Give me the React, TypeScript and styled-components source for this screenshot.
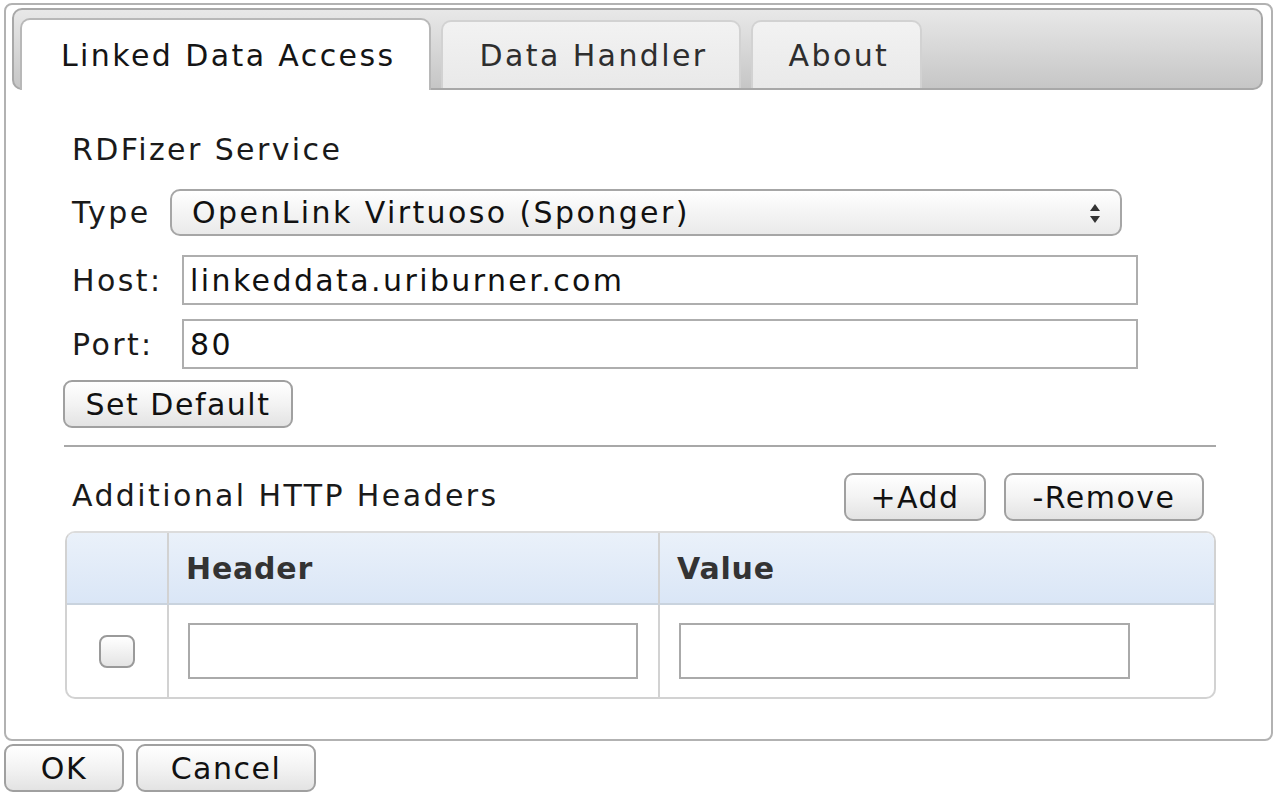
import * as React from "react";
import styled, { createGlobalStyle } from "styled-components";

const GlobalStyle = createGlobalStyle`
  html, body {
    margin: 0;
    padding: 0;
    background: #ffffff;
  }
  body {
    font-family: "DejaVu Sans", Verdana, sans-serif;
    color: #1a1a1a;
    letter-spacing: 2.4px;
  }
`;

const Page = styled.div`
  width: 1280px;
  height: 800px;
  padding: 3px 7px 0 4px;
  box-sizing: border-box;
`;

const Dialog = styled.div`
  height: 738px;
  box-sizing: border-box;
  border: 2px solid #b2b2b2;
  border-radius: 8px;
  padding: 3px 8px 0 6px;
`;

const TabBar = styled.div`
  height: 82px;
  box-sizing: border-box;
  display: flex;
  align-items: flex-end;
  gap: 10px;
  padding-left: 6px;
  border: 2px solid #a8a8a8;
  border-radius: 10px;
  background: linear-gradient(#e8e8e8, #c6c6c6);
`;

const Tab = styled.div<{ $active?: boolean }>`
  height: ${(p) => (p.$active ? "72px" : "68px")};
  margin-bottom: ${(p) => (p.$active ? "-2px" : "0")};
  box-sizing: border-box;
  padding: ${(p) => (p.$active ? "0 34px 0 39px" : "0 31px 0 36px")};
  display: flex;
  align-items: center;
  font-size: 30px;
  color: ${(p) => (p.$active ? "#151515" : "#2e2e2e")};
  background: ${(p) =>
    p.$active ? "#ffffff" : "linear-gradient(#f2f2f2, #e9e9e9)"};
  border: 2px solid ${(p) => (p.$active ? "#b8b8b8" : "#d2d2d2")};
  border-bottom: none;
  border-radius: 10px 10px 0 0;
`;

const Content = styled.div`
  padding: 37px 47px 0 52px;
`;

const SectionTitle = styled.div`
  font-size: 30px;
  height: 44px;
  display: flex;
  align-items: center;
  padding-left: 8px;
`;

const FieldRow = styled.div<{ $labelWidth: number; $right: number; $gap: number }>`
  display: flex;
  align-items: center;
  padding-right: ${(p) => p.$right}px;
  margin-top: ${(p) => p.$gap}px;

  label {
    width: ${(p) => p.$labelWidth}px;
    flex-shrink: 0;
    font-size: 30px;
    padding-left: 8px;
    box-sizing: border-box;
  }
`;

const Select = styled.div`
  flex: 1;
  height: 47px;
  box-sizing: border-box;
  border: 2px solid #a6a6a6;
  border-radius: 10px;
  background: linear-gradient(#ffffff 0%, #f5f5f5 45%, #eaeaea 100%);
  display: flex;
  align-items: center;
  justify-content: space-between;
  padding: 0 18px 0 20px;
  font-size: 30px;
  color: #111;
`;

const TextInput = styled.div`
  flex: 1;
  height: 50px;
  box-sizing: border-box;
  border: 2px solid #aeaeae;
  background: #fff;
  display: flex;
  align-items: center;
  padding-left: 6px;
  font-size: 30px;
  color: #111;
`;

const Button = styled.div<{ $width: number }>`
  width: ${(p) => p.$width}px;
  height: 48px;
  box-sizing: border-box;
  border: 2px solid #a0a0a0;
  border-radius: 9px;
  background: linear-gradient(#ffffff 0%, #f3f3f3 50%, #e3e3e3 100%);
  display: flex;
  align-items: center;
  justify-content: center;
  font-size: 30px;
  letter-spacing: 1.5px;
  color: #111;
`;

const ButtonLine = styled.div`
  margin-top: 11px;
  margin-left: -1px;
`;

const Divider = styled.div`
  height: 2px;
  background: #a8a8a8;
  margin-top: 17px;
`;

const HeadersRow = styled.div`
  display: flex;
  align-items: center;
  justify-content: space-between;
  margin-top: 26px;
  padding-right: 12px;
`;

const HeadersTitle = styled.div`
  font-size: 30px;
  padding-left: 8px;
  margin-top: -3px;
`;

const ButtonGroup = styled.div`
  display: flex;
  gap: 18px;
`;

const Table = styled.div`
  margin-top: 10px;
  margin-left: 1px;
  border: 2px solid #d2d2d2;
  border-top-color: #dcdcdc;
  border-radius: 10px;
  overflow: hidden;
  display: grid;
  grid-template-columns: 100px 491px 1fr;
`;

const HeadCell = styled.div`
  height: 72px;
  box-sizing: border-box;
  background: linear-gradient(#eaf1fa, #dae6f6);
  border-bottom: 2px solid #c9d3de;
  border-left: 2px solid #d2d2d2;
  display: flex;
  align-items: center;
  padding-left: 17px;
  font-size: 30px;
  font-weight: bold;
  letter-spacing: 0.8px;
  color: #333;

  &:first-child {
    border-left: none;
  }
`;

const BodyCell = styled.div`
  height: 92px;
  box-sizing: border-box;
  border-left: 2px solid #d2d2d2;
  display: flex;
  align-items: center;
  padding: 0 19px;
`;

const CheckCell = styled(BodyCell)`
  border-left: none;
  justify-content: center;
  padding: 0;
`;

const Checkbox = styled.div`
  width: 36px;
  height: 33px;
  box-sizing: border-box;
  border: 2px solid #9a9a9a;
  border-radius: 8px;
  background: linear-gradient(#ffffff, #e4e4e4);
`;

const CellInput = styled.div<{ $width: number }>`
  width: ${(p) => p.$width}px;
  height: 56px;
  box-sizing: border-box;
  border: 2px solid #aaaaaa;
  background: #fff;
`;

const Footer = styled.div`
  display: flex;
  gap: 12px;
  margin-top: 3px;
`;

const SelectArrows = () => (
  <svg width="14" height="24" viewBox="0 0 14 24">
    <path d="M7 3 L12 10 L2 10 Z" fill="#333" />
    <path d="M7 22 L12 15 L2 15 Z" fill="#333" />
  </svg>
);

const App: React.FC = () => {
  return (
    <>
      <GlobalStyle />
      <Page>
        <Dialog>
          <TabBar>
            <Tab $active>Linked Data Access</Tab>
            <Tab>Data Handler</Tab>
            <Tab>About</Tab>
          </TabBar>
          <Content>
            <SectionTitle>RDFizer Service</SectionTitle>
            <FieldRow $labelWidth={106} $right={94} $gap={18}>
              <label>Type</label>
              <Select>
                <span>OpenLink Virtuoso (Sponger)</span>
                <SelectArrows />
              </Select>
            </FieldRow>
            <FieldRow $labelWidth={118} $right={78} $gap={19}>
              <label>Host:</label>
              <TextInput>linkeddata.uriburner.com</TextInput>
            </FieldRow>
            <FieldRow $labelWidth={118} $right={78} $gap={14}>
              <label>Port:</label>
              <TextInput>80</TextInput>
            </FieldRow>
            <ButtonLine>
              <Button $width={230}>Set Default</Button>
            </ButtonLine>
            <Divider />
            <HeadersRow>
              <HeadersTitle>Additional HTTP Headers</HeadersTitle>
              <ButtonGroup>
                <Button $width={142}>+Add</Button>
                <Button $width={200}>-Remove</Button>
              </ButtonGroup>
            </HeadersRow>
            <Table>
              <HeadCell />
              <HeadCell>Header</HeadCell>
              <HeadCell>Value</HeadCell>
              <CheckCell>
                <Checkbox />
              </CheckCell>
              <BodyCell>
                <CellInput $width={450} />
              </BodyCell>
              <BodyCell>
                <CellInput $width={451} />
              </BodyCell>
            </Table>
          </Content>
        </Dialog>
        <Footer>
          <Button $width={120}>OK</Button>
          <Button $width={180}>Cancel</Button>
        </Footer>
      </Page>
    </>
  );
};

export default App;
